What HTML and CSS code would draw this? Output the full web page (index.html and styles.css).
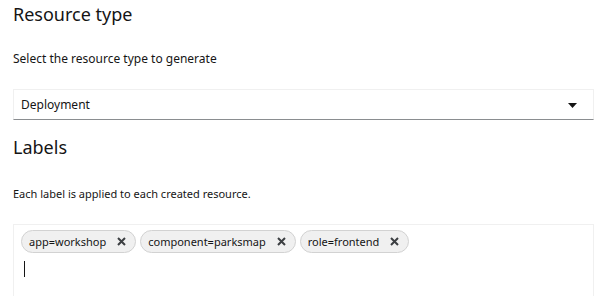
FILE: index.html
```html
<!DOCTYPE html>
<html lang="en">
<head>
  <meta charset="UTF-8">
  <meta name="viewport" content="width=device-width, initial-scale=1.0">
  <title>Generate resources</title>
  <link rel="stylesheet" href="styles.css">
</head>
<body>
  <div class="form">
    <h2>Resource type</h2>
    <p class="help">Select the resource type to generate</p>

    <div class="select">
      <span>Deployment</span>
      <svg class="caret" width="9" height="5" viewBox="0 0 9 5"><path d="M0 0h9L4.5 5z" fill="#151515"/></svg>
    </div>

    <h2 class="section">Labels</h2>
    <p class="help small">Each label is applied to each created resource.</p>

    <div class="chip-input">
      <div class="chips">
        <span class="chip">app=workshop<button type="button" class="chip-close"><svg width="9" height="9" viewBox="0 0 9 9"><path d="M1 1l7 7M8 1L1 8" stroke="#3c3f42" stroke-width="2"/></svg></button></span>
        <span class="chip">component=parksmap<button type="button" class="chip-close"><svg width="9" height="9" viewBox="0 0 9 9"><path d="M1 1l7 7M8 1L1 8" stroke="#3c3f42" stroke-width="2"/></svg></button></span>
        <span class="chip">role=frontend<button type="button" class="chip-close"><svg width="9" height="9" viewBox="0 0 9 9"><path d="M1 1l7 7M8 1L1 8" stroke="#3c3f42" stroke-width="2"/></svg></button></span>
      </div>
      <div class="typing"><span class="cursor"></span></div>
    </div>
  </div>
</body>
</html>
```

FILE: styles.css
```css
body {
  font-family: 'Noto Sans', sans-serif;
  background: #ffffff;
  color: #151515;
  margin: 0;
  padding: 0;
  overflow: hidden;
}

.form {
  padding: 2px 12px 0 13px;
}

h2 {
  font-size: 18px;
  font-weight: 400;
  line-height: 24px;
  margin: 0;
}

.help {
  font-size: 12px;
  line-height: 18px;
  margin: 24px 0 21px;
}

.help.small {
  font-size: 11px;
  margin-top: 26px;
}

.section {
  margin-top: 15px;
}

.select {
  height: 29px;
  display: flex;
  align-items: center;
  justify-content: space-between;
  padding: 0 16px 0 7px;
  border: 1px solid #f0f0f0;
  border-bottom-color: #8a8d90;
  font-size: 12px;
}

.caret {
  margin-top: 1px;
}

.chip-input {
  border: 1px solid #f0f0f0;
  border-bottom: none;
  padding: 5px 8px 0 7px;
  height: 80px;
}

.chips {
  display: flex;
  gap: 4px;
}

.chip {
  display: inline-flex;
  align-items: center;
  height: 21px;
  padding: 0 9px 0 7px;
  background: #f0f0f0;
  border: 1px solid #d2d2d2;
  border-radius: 12px;
  font-size: 11px;
  color: #151515;
}

.chip-close {
  display: flex;
  border: none;
  background: none;
  padding: 0;
  margin-left: 11px;
  cursor: pointer;
}

.typing {
  padding: 8px 0 0 3px;
}

.cursor {
  display: block;
  width: 1px;
  height: 16px;
  background: #151515;
}
```
